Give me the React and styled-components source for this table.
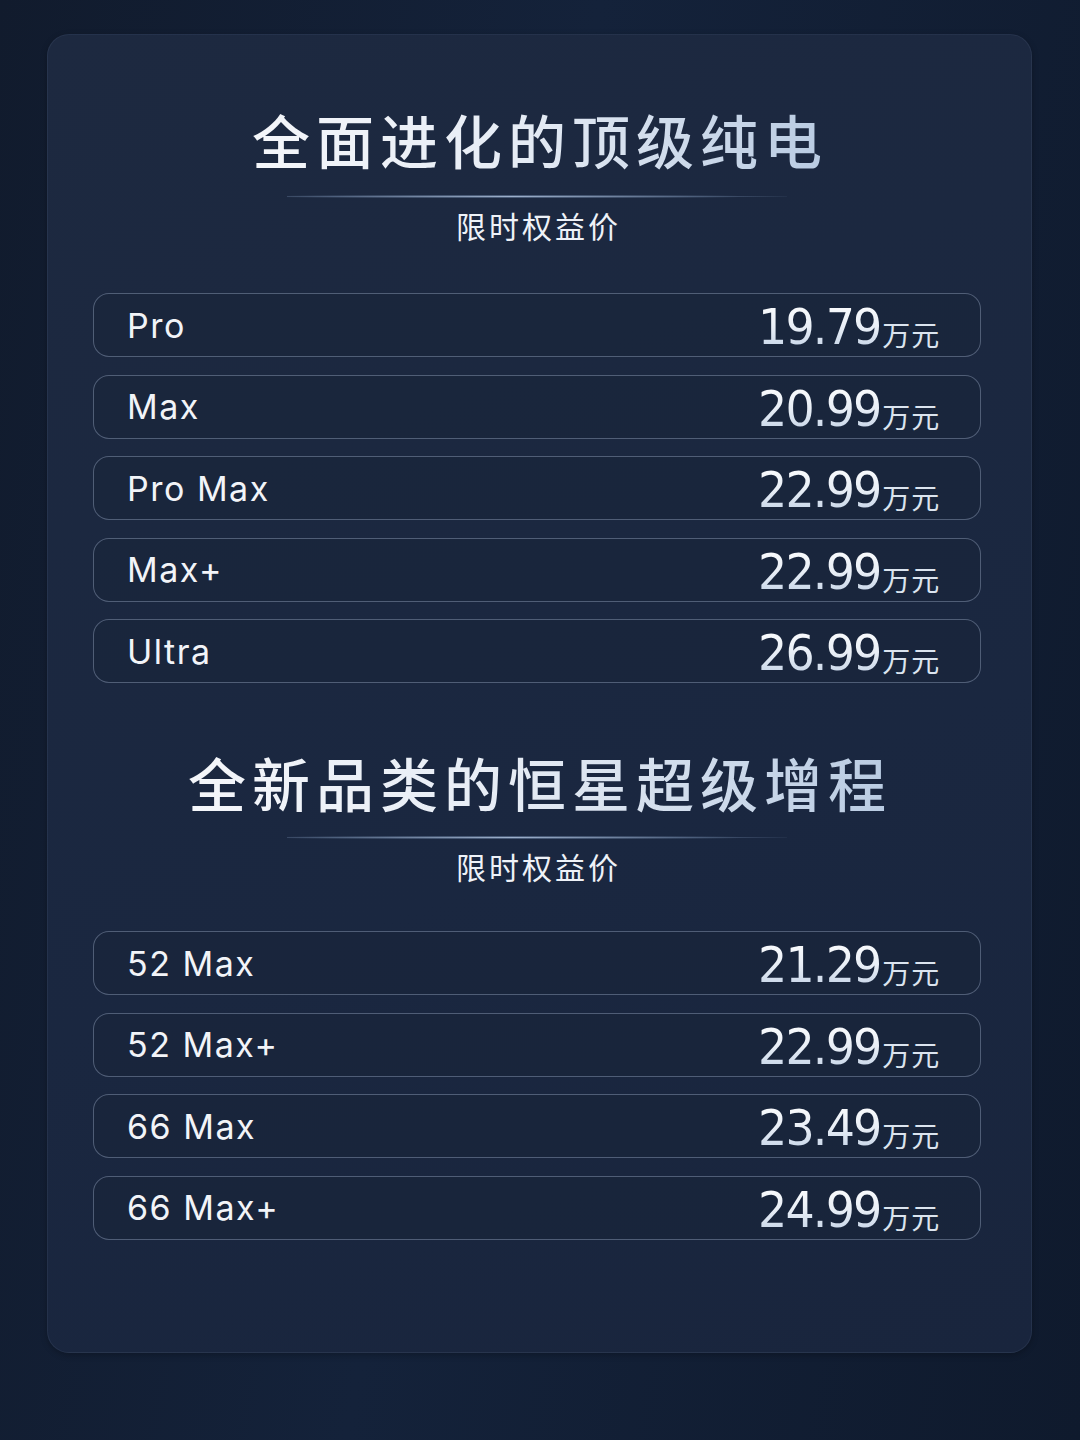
import React from "react";
import styled, { createGlobalStyle } from "styled-components";

const Global = createGlobalStyle`
  html, body { margin: 0; padding: 0; }
  body {
    background: #101a2c;
    font-family: Inter, "Noto Sans", "Noto Sans CJK SC", sans-serif;
  }
`;

const Page = styled.div`
  width: 1080px;
  height: 1440px;
  box-sizing: border-box;
  padding: 34px 48px 0 47px;
  background: linear-gradient(100deg, #111b2d 0%, #14223a 45%, #0f1a2d 100%);
`;

const Card = styled.div`
  height: 1319px;
  box-sizing: border-box;
  border-radius: 22px;
  padding: 72px 50px 0 45px;
  background: linear-gradient(160deg, #1d2940 0%, #1a2740 60%, #19253d 100%);
  border: 1px solid rgba(120, 140, 175, 0.12);
  box-shadow: 0 2px 6px rgba(0, 0, 0, 0.25);
`;

const Section = styled.section`
  display: flex;
  flex-direction: column;
  align-items: center;
  margin-top: ${(p) => p.$top || 0}px;
`;

const Title = styled.h1`
  margin: 0;
  font-family: "Noto Sans CJK SC", sans-serif;
  font-weight: 500;
  font-size: 58px;
  line-height: 64px;
  letter-spacing: 6px;
  margin-right: -6px;
  background: linear-gradient(90deg, #f4f6fa 0%, #e6ecf5 45%, #b9cbe2 100%);
  -webkit-background-clip: text;
  background-clip: text;
  color: transparent;
`;

const Divider = styled.div`
  width: 500px;
  height: 3px;
  margin-top: ${(p) => p.$gap}px;
  background: radial-gradient(
    ellipse at 45% 50%,
    rgba(180, 200, 228, 0.85) 0%,
    rgba(140, 165, 200, 0.45) 45%,
    rgba(40, 55, 80, 0) 75%
  );
`;

const Subtitle = styled.div`
  margin-top: 7px;
  font-family: "Noto Sans CJK SC", sans-serif;
  font-size: 30px;
  line-height: 40px;
  letter-spacing: 3px;
  margin-right: -3px;
  color: #eef2f8;
`;

const List = styled.div`
  align-self: stretch;
  display: flex;
  flex-direction: column;
  gap: 17.5px;
  margin-top: ${(p) => p.$gap}px;
`;

const Row = styled.div`
  height: 64px;
  box-sizing: border-box;
  border: 1.5px solid rgba(125, 140, 168, 0.55);
  border-radius: 16px;
  display: grid;
  grid-template-columns: 1fr 222px;
  align-items: center;
  padding-left: 33px;
  background: rgba(24, 35, 56, 0.5);
`;

const Label = styled.div`
  font-family: Inter, "Noto Sans", sans-serif;
  font-size: 34px;
  font-weight: 400;
  letter-spacing: 1.5px;
  color: #f2f4f8;
`;

const Price = styled.div`
  display: flex;
  align-items: baseline;
  padding-top: 4px;
`;

const Amount = styled.span`
  font-family: "DejaVu Sans", sans-serif;
  font-size: 50px;
  font-weight: 400;
  letter-spacing: -2px;
  line-height: 56px;
  display: inline-block;
  transform: scaleX(0.92);
  transform-origin: left center;
  margin-right: -9px;
  background: linear-gradient(180deg, #ffffff 0%, #e8eef6 50%, #bccde3 100%);
  -webkit-background-clip: text;
  background-clip: text;
  color: transparent;
`;

const Unit = styled.span`
  font-family: "Noto Sans CJK SC", sans-serif;
  font-size: 28px;
  letter-spacing: 1px;
  color: #dbe4ef;
  position: relative;
  top: 2px;
`;

const electric = [
  ["Pro", "19.79"],
  ["Max", "20.99"],
  ["Pro Max", "22.99"],
  ["Max+", "22.99"],
  ["Ultra", "26.99"],
];

const erev = [
  ["52 Max", "21.29"],
  ["52 Max+", "22.99"],
  ["66 Max", "23.49"],
  ["66 Max+", "24.99"],
];

function PriceList({ items, gap }) {
  return (
    <List $gap={gap}>
      {items.map(([name, price]) => (
        <Row key={name}>
          <Label>{name}</Label>
          <Price>
            <Amount>{price}</Amount>
            <Unit>万元</Unit>
          </Price>
        </Row>
      ))}
    </List>
  );
}

export default function App() {
  return (
    <>
      <Global />
      <Page>
        <Card>
          <Section>
            <Title>全面进化的顶级纯电</Title>
            <Divider $gap={24} />
            <Subtitle>限时权益价</Subtitle>
            <PriceList items={electric} gap={48} />
          </Section>
          <Section $top={67}>
            <Title>全新品类的恒星超级增程</Title>
            <Divider $gap={22} />
            <Subtitle>限时权益价</Subtitle>
            <PriceList items={erev} gap={45} />
          </Section>
        </Card>
      </Page>
    </>
  );
}
